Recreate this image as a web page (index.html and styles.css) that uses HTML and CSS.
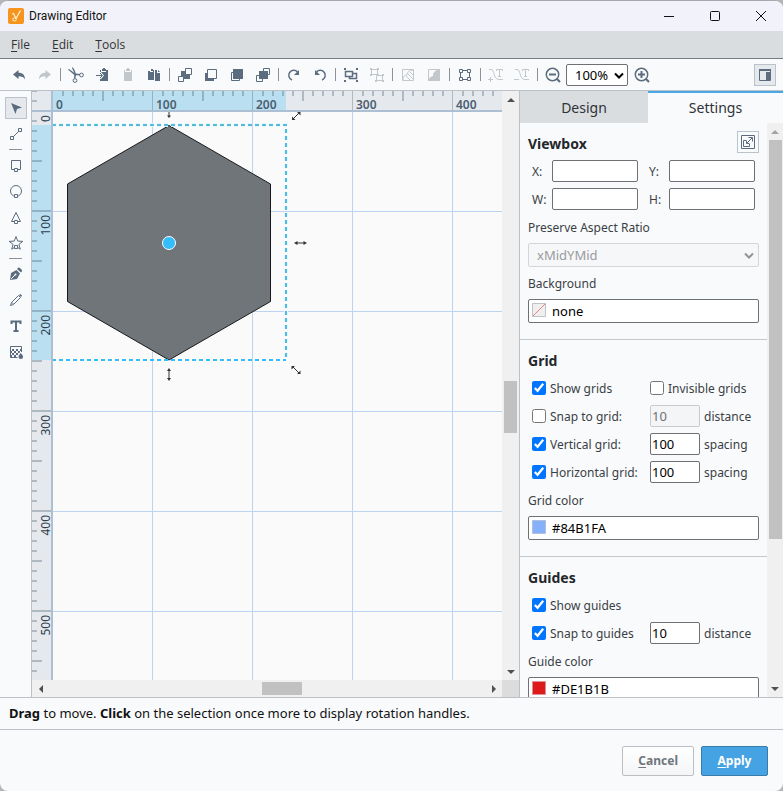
FILE: index.html
```html
<!DOCTYPE html>
<html lang="en">
<head>
<meta charset="utf-8">
<title>Drawing Editor</title>
<link rel="stylesheet" href="styles.css">
</head>
<body>
<div class="window">
  <header class="titlebar">
    <svg class="logo" viewBox="0 0 16 16"><rect width="16" height="16" rx="2" fill="#f7941d"/><path d="M12.500 2.500 8 10.500M4 6l1.500-.5L8 10.500" fill="none" stroke="#fff3d6" stroke-width="1.200"/><ellipse cx="6.500" cy="11.500" rx="1.800" ry="1.500" fill="none" stroke="#fff3d6"/></svg>
    <h1 class="title">Drawing Editor</h1>
    <div class="window-buttons">
      <button class="window-button" aria-label="Minimize"><svg viewBox="0 0 12 12"><path d="M1 6.500h10"/></svg></button>
      <button class="window-button" aria-label="Maximize"><svg viewBox="0 0 12 12"><rect x="1.500" y="1.500" width="9" height="9" rx="1"/></svg></button>
      <button class="window-button" aria-label="Close"><svg viewBox="0 0 12 12"><path d="m1 1 10 10M11 1 1 11"/></svg></button>
    </div>
  </header>

  <nav class="menubar">
    <button class="menu"><u>F</u>ile</button>
    <button class="menu"><u>E</u>dit</button>
    <button class="menu"><u>T</u>ools</button>
  </nav>

  <div class="toolbar">
    <button class="tool" aria-label="Undo"><svg viewBox="0 0 16 16"><path class="fill" d="M2 7.500 7.500 3v2.800c4.500 0 6.500 2.500 6.500 6.700-1-2-3-3.200-6.500-3.200V12z"/></svg></button>
    <button class="tool" disabled aria-label="Redo"><svg viewBox="0 0 16 16"><path class="fill" d="M14 7.500 8.500 3v2.800C4 5.800 2 8.300 2 12.500c1-2 3-3.200 6.500-3.200V12z"/></svg></button>
    <span class="sep"></span>
    <button class="tool" aria-label="Cut"><svg viewBox="0 0 16 16"><path class="fill" d="M4 0c2 1 3 4 3.800 6.500l4.200.5v1.300H8L7.300 11.500H6L6.300 8 0 2.500 1 2l5.500 4C5.500 4 4 2 4 0z"/><circle class="line" cx="7" cy="13.500" r="1.900"/><circle class="line" cx="13.500" cy="8" r="1.900"/></svg></button>
    <button class="tool" aria-label="Paste"><svg viewBox="0 0 16 16"><path class="fill" d="M6 3h1v2h5V3h2v11H6v-2h1l3-3.500L7 5H6zM8 2h1V1h2v1h1v2H8z"/><path class="line" d="M2 8.500h6M6 6l2.500 2.500L6 11"/></svg></button>
    <button class="tool" disabled aria-label="Paste in place"><svg viewBox="0 0 16 16"><path class="fill" d="M4 3h1v2h6V3h1v11H4zM6 2h1V1h2v1h1v2H6z"/></svg></button>
    <button class="tool" aria-label="Duplicate"><svg viewBox="0 0 16 16"><path class="fill" d="M2 4h2v1h3V3h1v10H2zM9 14V3h2v3h3v8zM12 3l2 2h-2zM5 2h2v2H5z"/></svg></button>
    <span class="sep"></span>
    <button class="tool" aria-label="Bring forward"><svg viewBox="0 0 16 16"><path class="fill" d="M4 4h9v8H4z"/><path class="paper" d="M1.500 9.500h5v5h-5zM8.500 1.500h6v6h-6z"/></svg></button>
    <button class="tool" aria-label="Send to back"><svg viewBox="0 0 16 16"><path class="fill" d="M2 6h9v8H2z"/><path class="paper" d="M4.500 2.500h9v9h-9z"/></svg></button>
    <button class="tool" aria-label="Bring to front"><svg viewBox="0 0 16 16"><path class="paper" d="M2.500 5.500h8v8h-8z"/><path class="fill" d="M4 2h10v10H4z"/></svg></button>
    <button class="tool" aria-label="Send backward"><svg viewBox="0 0 16 16"><path class="paper" d="M1.500 8.500h6v6h-6zM8.500 1.500h6v6h-6z"/><path class="fill" d="M4 4h9v8H4z"/></svg></button>
    <span class="sep"></span>
    <button class="tool" aria-label="Rotate right"><svg viewBox="0 0 16 16"><path class="thick" d="M6 13A5 5 0 1 1 11.500 5"/><path class="fill" d="M13 3v5H8z"/></svg></button>
    <button class="tool" aria-label="Rotate left"><svg viewBox="0 0 16 16"><path class="thick" d="M10 13A5 5 0 1 0 4.500 5"/><path class="fill" d="M3 3v5h5z"/></svg></button>
    <span class="sep"></span>
    <button class="tool" aria-label="Group"><svg viewBox="0 0 16 16"><path class="fill" d="M1 1h2v2H1zM13 1h2v2h-2zM1 13h2v2H1zM13 13h2v2h-2z"/><path class="thick" d="M2.500 4.500h7v5h-7z"/><path class="thick" d="M10 6.500h3.500v5h-7V10"/></svg></button>
    <button class="tool" disabled aria-label="Ungroup"><svg viewBox="0 0 16 16"><path class="line" d="M2.500 2.500h6v5h-6zM7.500 8.500h6v5h-6z"/><path class="fill" d="M1 1h2v2H1zM8 1h2v2H8zM1 7h2v2H1zM8 7h2v2H8zM13 7h2v2h-2zM6 13h2v2H6zM13 13h2v2h-2z"/></svg></button>
    <span class="sep"></span>
    <button class="tool" disabled aria-label="Clip"><svg viewBox="0 0 16 16"><path class="line" d="M2.500 2.500h11v11h-11zM3 13c0-4 2-5 4-5 0-3 3-5 6-5M6 9l4 4M8 7l5 5M10 5l3 3"/></svg></button>
    <button class="tool" disabled aria-label="Mask"><svg viewBox="0 0 16 16"><path class="line" d="M2.500 2.500h11v11h-11z"/><path class="fill" d="M2 14c1-4 3-4 5-5 0-4 3-6 7-7v12z"/></svg></button>
    <span class="sep"></span>
    <button class="tool" aria-label="Convert to path"><svg viewBox="0 0 16 16"><path class="line" d="M4 3.500h8M4 12.500h8M3.500 5v6M12.500 5v6"/><path class="paper" d="M2.500 2.500h3v3h-3zM10.500 2.500h3v3h-3zM2.500 10.500h3v3h-3zM10.500 10.500h3v3h-3z"/></svg></button>
    <span class="sep"></span>
    <button class="tool" disabled aria-label="Put text on path"><svg viewBox="0 0 16 16"><path class="line" d="M1 2.500h2c4 0 2 10 8 10h4M0 12.500h5M2.500 10v5M8.500 4V2.500h6V4M11.500 3v6M10 9.500h3"/></svg></button>
    <button class="tool" disabled aria-label="Remove text from path"><svg viewBox="0 0 16 16"><path class="line" d="M1 2.500h2c4 0 2 10 8 10h4M0 12.500h5M8.500 4V2.500h6V4M11.500 3v6M10 9.500h3"/></svg></button>
    <span class="sep"></span>
    <button class="tool" aria-label="Zoom out"><svg viewBox="0 0 16 16"><circle class="thick" cx="7.500" cy="7.500" r="6.200"/><path class="heavy" d="M4 7.500h7M12 12l3 3"/></svg></button>
    <div class="select zoom-select">
      <select aria-label="Zoom"><option>100%</option></select>
      <svg class="chevron" viewBox="0 0 10 7"><path d="m1 1.500 4 4 4-4"/></svg>
    </div>
    <button class="tool" aria-label="Zoom in"><svg viewBox="0 0 16 16"><circle class="thick" cx="7.500" cy="7.500" r="6.200"/><path class="heavy" d="M4 7.500h7M7.500 4v7M12 12l3 3"/></svg></button>
    <button class="boxed panel-toggle" aria-label="Toggle side panel"><svg viewBox="0 0 16 16"><path class="line" d="M2.500 2.500h11v11h-11z"/><path class="fill" d="M2 2h12v2H2zM9 5h4v8H9z"/></svg></button>
  </div>

  <main class="workspace">
    <div class="toolbox">
      <button class="tool selected" aria-label="Select"><svg viewBox="0 0 16 16"><path class="fill" d="m3 3 11 4.500-5 1.500-1.500 5z"/></svg></button>
      <button class="tool" aria-label="Line"><svg viewBox="0 0 16 16"><path class="line" d="m5 11 6-6M2.500 10.500h3v3h-3zM10.500 2.500h3v3h-3z"/></svg></button>
      <span class="rule"></span>
      <button class="tool" aria-label="Rectangle"><svg viewBox="0 0 16 16"><path class="line" d="M3.500 3.500h9v9h-9z"/><path class="paper" d="M6.500 11.500h3v3h-3z"/></svg></button>
      <button class="tool" aria-label="Ellipse"><svg viewBox="0 0 16 16"><circle class="line" cx="8" cy="8" r="5.500"/><path class="paper" d="M6.500 11.500h3v3h-3z"/></svg></button>
      <button class="tool" aria-label="Polygon"><svg viewBox="0 0 16 16"><path class="line" d="m8 3.500 4.500 9h-9z"/><path class="paper" d="M6.500 11.500h3v3h-3z"/></svg></button>
      <button class="tool" aria-label="Star"><svg viewBox="0 0 16 16"><path class="line" d="m8 1.500 1.800 4.600 5 .3-3.900 3 1.400 4.800L8 11.500l-4.300 2.700 1.400-4.800-3.900-3 5-.3z"/><path class="paper" d="M6.500 10.500h3v3h-3z"/></svg></button>
      <span class="rule"></span>
      <button class="tool" aria-label="Pen"><svg viewBox="0 0 16 16"><path class="fill" d="m2 14 1-7 5.500-3 3.500 3.500L9 13zM9 3l1.500-1.500L12 2l2 2-.2 1.500L13 6.500z"/><path d="m3 13 4-4" stroke="#f9fafc"/><circle cx="7.500" cy="8.500" r="1" fill="#f9fafc"/></svg></button>
      <button class="tool" aria-label="Pencil"><svg viewBox="0 0 16 16"><path class="line" d="m2.500 13.500 1-3 7-7 2 2-7 7zM4 10.500l1.500 1.500"/><path class="fill" d="m11 3 1.500-1 1.500 1.500L13 5z"/></svg></button>
      <button class="tool" aria-label="Text"><svg viewBox="0 0 16 16"><path class="heavy" d="M3.500 6V3.500h9V6M8 3.500v9.500M5.500 13h5"/></svg></button>
      <button class="tool" aria-label="Fill"><svg viewBox="0 0 16 16"><path class="line" d="M10 13.500H2.500v-11h11V8"/><path class="fill" d="M4 5h2v2H4zM8 5h2v2H8zM12 5h2v2h-2zM2 7h2v2H2zM6 7h2v2H6zM10 7h2v2h-2zM4 9h2v2H4zM8 9h2v2H8zM2 11h2v2H2zM6 11h2v2H6z"/><path d="M12.500 7.500c2 2.500 3.300 3.500 3.300 5.300a3.300 3.300 0 0 1-6.600 0c0-1.800 1.300-2.800 3.300-5.300z" fill="#f9fafc"/><path class="fill" d="M12.800 9c1.500 2 2.300 2.600 2.300 3.800a2.300 2.300 0 0 1-4.600 0c0-1.200.8-1.800 2.300-3.800z"/></svg></button>
    </div>

    <div class="canvas-area">
      <svg class="canvas" role="img" aria-label="Hexagon on the drawing canvas">
        <defs>
          <pattern id="grid" x="20" y="20" width="100" height="100" patternUnits="userSpaceOnUse"><path d="M.5 0v100M0 .5h100" stroke="#bcd3f2" fill="none"/></pattern>
          <pattern id="ticks-x" x="20" y="0" width="100" height="20" patternUnits="userSpaceOnUse"><path d="M0 0h1v20H0zM10 0h2v5h-2zM20 0h2v5h-2zM30 0h2v5h-2zM40 0h2v5h-2zM50 0h2v10h-2zM60 0h2v5h-2zM70 0h2v5h-2zM80 0h2v5h-2zM90 0h2v5h-2z"/></pattern>
          <pattern id="ticks-y" x="0" y="19" width="20" height="100" patternUnits="userSpaceOnUse"><path d="M0 0h20v2H0zM0 10h5v2H0zM0 20h5v2H0zM0 30h5v2H0zM0 40h5v2H0zM0 50h10v2H0zM0 60h5v2H0zM0 70h5v2H0zM0 80h5v2H0zM0 90h5v2H0z"/></pattern>
        </defs>
        <rect width="100%" height="100%" fill="#fafafb"/>
        <rect x="20" y="20" width="100%" height="100%" fill="url(#grid)"/>
        <path d="M137 34.500 238.500 93v117.500L137 269 35.500 210.500V93z" fill="#6f7579" stroke="#17191b"/>
        <circle cx="137" cy="152" r="6.500" fill="#33bdfd" stroke="#fff"/>
        <path class="halo" d="M20 34h234v235"/>
        <path class="dash dash-soft" d="M20 34h234v235"/>
        <path class="dash" d="M20 269h234"/>
        <g class="handle"><path d="M137 16v9M137 279v9M264 152h9M261 28l6-6M261 276l6 6"/><path class="tip" d="M135 24.500h4l-2 2.500zM135 280l2-3 2 3zM135 287l2 3 2-3zM265.500 150v4l-3.500-2zM271.500 150v4l3.500-2zM265 21h3.500v3.500zM260 25.500V29h3.500zM259.500 278.500V275h3.500zM268.500 279.500v3.500H265z"/></g>
        <rect width="100%" height="20" fill="#e5e9ee"/>
        <rect width="20" height="100%" fill="#e5e9ee"/>
        <path d="M20 0h234v20H20zM0 34h20v235H0z" fill="#b9dff1"/>
        <rect class="ticks" x="20" width="100%" height="20" fill="url(#ticks-x)"/>
        <rect class="ticks" width="20" height="100%" fill="url(#ticks-y)"/>
        <rect y="19" width="100%" height="2" fill="#adbfd2"/>
        <rect x="19" width="2" height="100%" fill="#adbfd2"/>
        <g class="numbers numbers-x"><text x="24" y="18">0</text><text x="124" y="18">100</text><text x="224" y="18">200</text><text x="324" y="18">300</text><text x="424" y="18">400</text></g>
        <g class="numbers numbers-y" transform="rotate(-90)"><text x="-24" y="18">0</text><text x="-124" y="18">100</text><text x="-224" y="18">200</text><text x="-324" y="18">300</text><text x="-424" y="18">400</text><text x="-524" y="18">500</text></g>
      </svg>
      <div class="scroll scroll-y canvas-y"><i class="arrow up"></i><i class="before"></i><i class="thumb"></i><i class="after"></i><i class="arrow down"></i></div>
      <div class="scroll scroll-x canvas-x"><i class="arrow left"></i><i class="before"></i><i class="thumb"></i><i class="after"></i><i class="arrow right"></i></div>
      <div class="corner"></div>
    </div>

    <aside class="panel">
      <div class="tabs" role="tablist">
        <button class="tab" role="tab">Design</button>
        <button class="tab active" role="tab" aria-selected="true">Settings</button>
      </div>
      <div class="panel-body">
        <form class="settings">
          <section class="section">
            <div class="section-head"><h2>Viewbox</h2>
              <button type="button" class="boxed" aria-label="Fit viewbox"><svg viewBox="0 0 16 16"><path class="line" d="M1.500 1.500h13v13h-13zM6 6.500H3.500v6h6V10M7 9l5-5M8.500 3.500h4v4M6.500 6.500v3h3"/></svg></button></div>
            <div class="coords">
              <label for="vx">X:</label><input id="vx" type="text">
              <label for="vy">Y:</label><input id="vy" type="text">
              <label for="vw">W:</label><input id="vw" type="text">
              <label for="vh">H:</label><input id="vh" type="text">
            </div>
            <div class="field"><label for="par">Preserve Aspect Ratio</label>
              <div class="select ratio-select"><select id="par" disabled><option>xMidYMid</option></select><svg class="chevron" viewBox="0 0 10 7"><path d="m1 1.500 4 4 4-4"/></svg></div></div>
            <div class="field"><label for="bg">Background</label>
              <div class="color"><svg class="swatch" viewBox="0 0 14 14"><path d="M.5.500h13v13H.5z" fill="#efefef" stroke="#bbc2c9"/><path d="M1 13 13 1" stroke="#ec8080"/></svg><input id="bg" type="text" value="none"></div></div>
          </section>
          <section class="section">
            <div class="section-head"><h2>Grid</h2></div>
            <div class="options">
              <label class="check"><input type="checkbox" checked><span>Show grids</span></label>
              <label class="check"><input type="checkbox"><span>Invisible grids</span></label>
              <label class="check"><input type="checkbox"><span>Snap to grid:</span></label>
              <label class="amount"><input type="text" value="10" disabled><span>distance</span></label>
              <label class="check"><input type="checkbox" checked><span>Vertical grid:</span></label>
              <label class="amount"><input type="text" value="100"><span>spacing</span></label>
              <label class="check"><input type="checkbox" checked><span>Horizontal grid:</span></label>
              <label class="amount"><input type="text" value="100"><span>spacing</span></label>
            </div>
            <div class="field"><label for="gc">Grid color</label>
              <div class="color"><svg class="swatch" viewBox="0 0 14 14"><path d="M.5.500h13v13H.5z" fill="#84b1fa" stroke="#b0bfdc"/></svg><input id="gc" type="text" value="#84B1FA"></div></div>
          </section>
          <section class="section">
            <div class="section-head"><h2>Guides</h2></div>
            <div class="options">
              <label class="check wide"><input type="checkbox" checked><span>Show guides</span></label>
              <label class="check"><input type="checkbox" checked><span>Snap to guides</span></label>
              <label class="amount"><input type="text" value="10"><span>distance</span></label>
            </div>
            <div class="field"><label for="uc">Guide color</label>
              <div class="color"><svg class="swatch" viewBox="0 0 14 14"><path d="M.5.500h13v13H.5z" fill="#de1b1b" stroke="#dd9098"/></svg><input id="uc" type="text" value="#DE1B1B"></div></div>
          </section>
        </form>
        <div class="scroll scroll-y panel-y"><i class="arrow up muted"></i><i class="thumb"></i><i class="after"></i><i class="arrow down"></i></div>
      </div>
    </aside>
  </main>

  <p class="status"><b>Drag</b> to move. <b>Click</b> on the selection once more to display rotation handles.</p>

  <footer class="footer">
    <button class="action"><u>C</u>ancel</button>
    <button class="action primary"><u>A</u>pply</button>
  </footer>
</div>
</body>
</html>
```
FILE: styles.css
```css
* { box-sizing: border-box; }

body {
  margin: 0;
  background: #b5b5b9;
  font: 12px/16px "Noto Sans", sans-serif;
  color: #3a3f45;
}

button, input, select { font: inherit; color: inherit; margin: 0; }
button { padding: 0; border: 0; background: none; }
h1, h2, p { margin: 0; }

.window {
  display: flex;
  flex-direction: column;
  height: 100vh;
  border-top: 1px solid #a9a9ad;
  border-radius: 8px;
  overflow: hidden;
  background: #f9fafc;
}

/* Title and menu */
.titlebar {
  display: flex;
  flex: 0 0 30px;
  align-items: center;
  padding-left: 8px;
  background: #f2f2fa;
}
.logo { width: 16px; height: 16px; }
.title {
  flex: 1;
  margin-left: 5px;
  font: 12px/16px Roboto, sans-serif;
  color: #111;
}
.window-buttons { display: flex; margin-right: -1px; }
.window-button { display: grid; place-items: center; width: 46px; height: 30px; }
.window-button svg { width: 12px; height: 12px; fill: none; stroke: #111; }

.menubar {
  display: flex;
  flex: 0 0 28px;
  gap: 22px;
  padding-left: 11px;
  border-bottom: 1px solid #777d82;
  background: #d9dde0;
}
.menu { font: 12px/16px "Open Sans", sans-serif; color: #333; }
u { text-underline-offset: 2px; }

/* Icons */
.tool svg, .boxed svg { display: block; width: 16px; height: 16px; }
.fill { fill: #5a6c7d; }
.line, .thick, .heavy { fill: none; stroke: #5a6c7d; }
.thick { stroke-width: 1.500; }
.heavy { stroke-width: 2; }
.paper { fill: #f9fafc; stroke: #5a6c7d; }
.tool:disabled .fill { fill: #c2c7cb; }
.tool:disabled .line { stroke: #c2c7cb; }

.tool { display: grid; flex: 0 0 26px; place-items: center; height: 26px; }
.boxed {
  display: grid;
  place-items: center;
  width: 22px;
  height: 22px;
  border: 1px solid #bbc2c9;
  background: #f9fafc;
}

.toolbar {
  display: flex;
  flex: 0 0 32px;
  align-items: center;
  padding: 0 7px 0 6px;
  border-bottom: 1px solid #bcc1c7;
}
.sep { flex: 0 0 5px; height: 13px; }
.sep::before { content: ""; display: block; width: 1px; height: 13px; margin-left: 2px; background: #8d9297; }
.panel-toggle { margin-left: auto; background: #e5e9ee; }

/* Selects */
.select { position: relative; }
.select select {
  display: block;
  width: 100%;
  appearance: none;
  border: 1px solid #6f7073;
  border-radius: 2px;
  background: #fff;
  font-size: 13px;
  line-height: 18px;
  color: #000;
}
.chevron { position: absolute; top: 50%; width: 10px; height: 7px; margin-top: -3px; fill: none; stroke: #000; stroke-width: 2; pointer-events: none; }
.zoom-select { flex: 0 0 62px; margin-right: 1px; }
.zoom-select select { height: 22px; padding: 0 0 0 8px; }
.zoom-select .chevron { right: 4px; }
.ratio-select select { height: 24px; padding: 0 0 0 8px; border-color: #d3d5d8; background: #f6f7f9; color: #999b9e; opacity: 1; }
.ratio-select .chevron { right: 5px; stroke: #919497; }

/* Workspace */
.workspace {
  display: grid;
  flex: 1;
  grid-template-columns: 32px minmax(0, 1fr) 264px;
  min-height: 0;
  border-bottom: 1px solid #bcc1c7;
}
.toolbox {
  display: flex;
  flex-direction: column;
  align-items: center;
  padding-top: 4px;
  border-right: 1px solid #bcc1c7;
}
.toolbox .tool { width: 22px; }
.toolbox .selected { flex-basis: 22px; height: 22px; margin: 2px 0; border: 1px solid #bbc2c9; background: #e5e9ee; }
.rule { flex: 0 0 5px; width: 13px; }
.rule::before { content: ""; display: block; height: 1px; margin-top: 2px; background: #8d9297; }

.canvas-area {
  display: grid;
  grid-template-columns: minmax(0, 1fr) 17px;
  grid-template-rows: minmax(0, 1fr) 17px;
  min-height: 0;
}
.canvas { display: block; width: 100%; height: 100%; overflow: hidden; }
.ticks { opacity: .35; }
pattern path { shape-rendering: crispEdges; }
#ticks-x path, #ticks-y path { fill: #48606f; }
.numbers { font-size: 12px; fill: #2d3f4d; }
.numbers-x { font-weight: 600; fill: #4b6070; }
.numbers-y { text-anchor: end; }
.halo { fill: none; stroke: #dffaff; stroke-width: 4; stroke-dasharray: 4 3; }
.dash { fill: none; stroke: #33bdfd; stroke-width: 2; stroke-dasharray: 4 3; }
.dash-soft { stroke: #58b9db; }
.handle { fill: none; stroke: #333; }
.tip { fill: #333; stroke: none; }
.corner { background: #dcdcdc; }

/* Scroll bars */
.scroll { display: flex; background: #f0f0f0; }
.scroll-y { flex-direction: column; }
.scroll .thumb { background: #c1c1c1; }
.scroll-y .thumb { margin: 0 2px; }
.scroll-x .thumb { margin: 2px 0; }
.arrow { display: grid; flex: 0 0 17px; place-items: center; }
.arrow::before { content: ""; border: 4px solid transparent; }
.up::before { border-top-width: 0; border-bottom-color: #505050; }
.down::before { border-bottom-width: 0; border-top-color: #505050; }
.left::before { border-left-width: 0; border-right-color: #505050; }
.right::before { border-right-width: 0; border-left-color: #505050; }
.muted::before { border-bottom-color: #a3a3a3; }
.canvas-y .before { flex: 273; }
.canvas-y .thumb { flex: 52; }
.canvas-y .after { flex: 230; }
.canvas-x .before { flex: 213; }
.canvas-x .thumb { flex: 40; }
.canvas-x .after { flex: 183; }
.panel-y .thumb { flex: 399; margin: 0 1px 0 2px; }
.panel-y .after { flex: 141; }

/* Side panel */
.panel { display: flex; flex-direction: column; min-height: 0; border-left: 1px solid #bcc1c7; }
.tabs { display: flex; flex: 0 0 32px; }
.tab { flex: 1 1 135px; border-top: 2px solid #4aa8e6; font-size: 14px; line-height: 20px; color: #2f3337; }
.tab:not(.active) { flex-basis: 128px; border-top-color: #d9dde0; background: #d9dde0; }
.panel-body { display: grid; flex: 1; grid-template-columns: minmax(0, 1fr) 16px; min-height: 0; }
.settings { min-height: 0; overflow: hidden; }
.section { padding: 8px 8px 16px; border-bottom: 1px solid #c3c8cd; }
.section-head { display: flex; justify-content: space-between; height: 26px; }
.section-head h2 { font-size: 14px; line-height: 26px; color: #23272b; }

.settings input[type="text"] {
  min-width: 0;
  height: 22px;
  padding: 0 1px;
  border: 1px solid #6f7073;
  border-radius: 2px;
  background: #fff;
  font-size: 13px;
  color: #000;
}
.settings input[type="text"]:disabled { border-color: #c9cbcd; background: #f4f5f6; color: #6e7072; }

.coords {
  display: grid;
  grid-template-columns: 20px 97px 20px 86px;
  grid-auto-rows: 28px;
  align-items: center;
  padding: 0 4px;
}
.coords input { width: 86px; }
.coords label, .check span, .amount span { padding-top: 2px; }

.field + .field { margin-top: 2px; }
.field > label { display: block; line-height: 30px; }
.color { position: relative; }
.settings .color input { display: block; width: 100%; height: 24px; padding-left: 23px; }
.swatch { position: absolute; top: 4px; left: 4px; width: 14px; height: 14px; }

.options { display: grid; grid-template-columns: 118px 1fr; grid-auto-rows: 28px; padding-left: 4px; }
.check, .amount { display: flex; align-items: center; gap: 4px; white-space: nowrap; }
.check input { width: 14px; height: 14px; accent-color: #0075ff; }
.wide { grid-column: 1 / -1; }
.settings .amount input { width: 50px; }

/* Bottom */
.status {
  flex: 0 0 32px;
  padding-left: 9px;
  border-bottom: 1px solid #bcc1c7;
  font-size: 13px;
  line-height: 30px;
  color: #111;
}
.footer { display: flex; flex: 0 0 61px; justify-content: flex-end; gap: 7px; padding: 16px 15px 15px; }
.action {
  min-width: 67px;
  height: 30px;
  padding: 0 15px;
  border: 1px solid #bcbec1;
  border-radius: 2px;
  background: linear-gradient(#fff, #f4f5f7);
  font-weight: 700;
  color: #6f767c;
}
.primary { border-color: #3a7ca9; background: #45a3e3; color: #fff; }
```
